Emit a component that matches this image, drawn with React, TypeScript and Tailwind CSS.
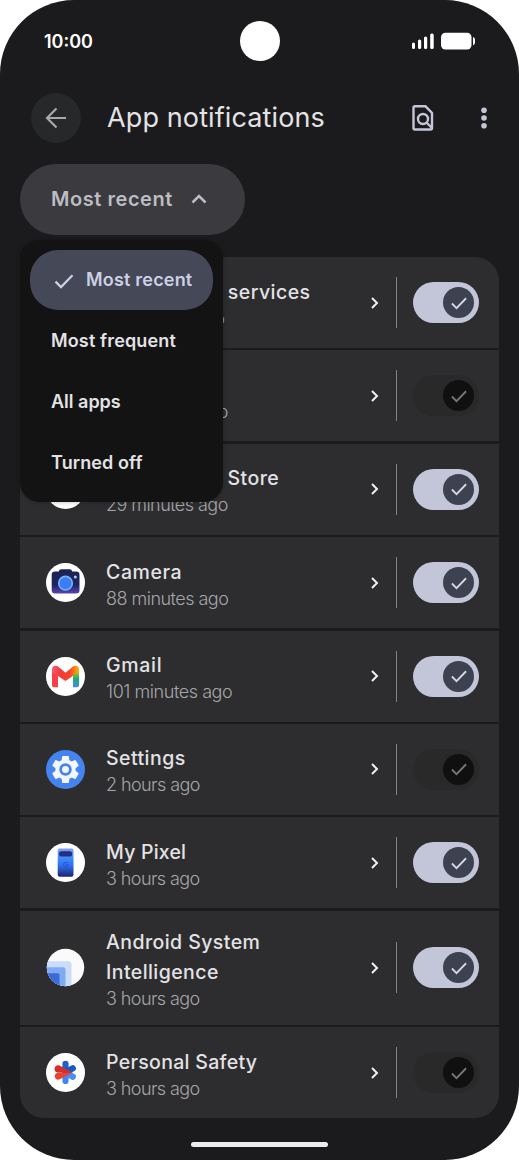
import type { ReactNode } from 'react'
import { Switch } from '@headlessui/react'
import clsx from 'clsx'

type AppRow = {
  title: string
  titleClass: string
  time: string
  timeClass: string
  enabled: boolean
  tall?: boolean
  icon: ReactNode
}

const CheckIcon = ({ className }: { className?: string }) => (
  <svg viewBox="0 0 24 24" fill="none" stroke="currentColor" strokeWidth="2.2" className={className}>
    <path d="M3.500 12.600 9 18.100 20.500 6.300" />
  </svg>
)

const CameraIcon = () => (
  <svg viewBox="0 0 39 39" className="w-[39px] h-[39px]">
    <defs>
      <linearGradient id="cam" x1="0" y1="0" x2="0" y2="1">
        <stop offset="0" stopColor="#1b2352" />
        <stop offset="0.65" stopColor="#1e2560" />
        <stop offset="1" stopColor="#5a45b5" />
      </linearGradient>
    </defs>
    <circle cx="19.5" cy="19.5" r="19.5" fill="#fff" />
    <path
      d="M12.800 8.600q.3-2.300 2.500-2.300h8.400q2.200 0 2.500 2.300h4q3.300 0 3.300 3.300v15.300q0 3.300-3.300 3.300H9q-3.300 0-3.300-3.300V11.900q0-3.300 3.300-3.300z"
      fill="url(#cam)"
    />
    <circle cx="19.500" cy="20.200" r="6.800" fill="#3a7df4" stroke="#76b2fa" strokeWidth="1.600" />
    <circle cx="29.300" cy="14" r="1.500" fill="#a8d1ff" />
  </svg>
)

const GmailIcon = () => (
  <svg viewBox="0 0 39 39" className="w-[39px] h-[39px]">
    <defs>
      <linearGradient id="gmRight" x1="0" y1="0" x2="0" y2="1">
        <stop offset="0" stopColor="#fbbc04" />
        <stop offset="0.35" stopColor="#8bc53f" />
        <stop offset="0.6" stopColor="#1fae6b" />
        <stop offset="1" stopColor="#3c8bf5" />
      </linearGradient>
      <linearGradient id="gmLeft" x1="0" y1="0" x2="0.3" y2="1">
        <stop offset="0" stopColor="#ff7fa8" />
        <stop offset="0.4" stopColor="#f8404a" />
      </linearGradient>
      <linearGradient id="gmMid" x1="0" y1="0" x2="1" y2="0">
        <stop offset="0" stopColor="#fb5b78" />
        <stop offset="0.3" stopColor="#f23b36" />
        <stop offset="0.65" stopColor="#f5432d" />
        <stop offset="1" stopColor="#fbb704" />
      </linearGradient>
    </defs>
    <circle cx="19.5" cy="19.5" r="19.5" fill="#fff" />
    <path d="M6 12.500q0-3 3-3.500l3 4v17.300H8q-2 0-2-2z" fill="url(#gmLeft)" />
    <path d="M33 12.500q0-3-3-3.500l-3 4v17.300H31q2 0 2-2z" fill="url(#gmRight)" />
    <path
      d="M6.200 13.500C5.500 9.300 9.500 7.500 12.300 9.700l7.200 6 7.200-6c2.800-2.200 6.800-.4 6.100 3.800-.2 1.300-.9 2-1.900 2.800L19.500 24 8.100 16.300c-1-.8-1.700-1.500-1.900-2.800z"
      fill="url(#gmMid)"
    />
  </svg>
)

const SettingsIcon = () => (
  <svg viewBox="0 0 39 39" className="w-[39px] h-[39px]">
    <circle cx="19.5" cy="19.5" r="19.5" fill="#4583ee" />
    <g transform="translate(3.300 3.300) scale(1.350)">
      <path
        fill="#f3f6fd"
        d="M19.430 12.980c.040-.320.070-.640.070-.980s-.030-.660-.070-.980l2.110-1.650c.190-.150.240-.420.120-.640l-2-3.460c-.120-.220-.390-.300-.610-.220l-2.490 1c-.520-.400-1.080-.730-1.690-.980l-.380-2.650C14.460 2.180 14.250 2 14 2h-4c-.250 0-.460.180-.490.420l-.380 2.650c-.610.250-1.170.590-1.690.980l-2.490-1c-.230-.090-.490 0-.610.220l-2 3.460c-.130.220-.070.490.120.640l2.110 1.650c-.040.320-.070.650-.070.980s.030.660.070.980l-2.110 1.650c-.190.150-.240.420-.120.640l2 3.460c.120.220.390.300.610.220l2.490-1c.520.400 1.080.730 1.690.980l.380 2.650c.030.240.240.420.490.420h4c.250 0 .460-.180.490-.420l.380-2.650c.610-.250 1.170-.590 1.690-.980l2.490 1c.230.090.490 0 .610-.220l2-3.460c.120-.220.070-.490-.120-.640z"
      />
      <circle cx="12" cy="12" r="3.600" fill="none" stroke="#4583ee" strokeWidth="2" />
    </g>
  </svg>
)

const PixelIcon = () => (
  <svg viewBox="0 0 39 39" className="w-[39px] h-[39px]">
    <defs>
      <linearGradient id="px" x1="0" y1="0" x2="0" y2="1">
        <stop offset="0" stopColor="#8b9cf5" />
        <stop offset="0.2" stopColor="#4a9bfb" />
        <stop offset="0.6" stopColor="#2f6ff0" />
        <stop offset="1" stopColor="#1c2568" />
      </linearGradient>
    </defs>
    <circle cx="19.5" cy="19.5" r="19.5" fill="#fff" />
    <rect x="11.700" y="5.600" width="15.800" height="28.200" rx="2" fill="url(#px)" />
    <rect x="13" y="8.300" width="13.200" height="5.200" rx="2.600" fill="#23307f" />
    <path d="M21.700 20.200a2.300 2.300 0 1 0 .4 1.600h-2.200" fill="none" stroke="#2458d8" strokeWidth="1.100" />
  </svg>
)

const IntelligenceIcon = () => (
  <svg viewBox="0 0 39 39" className="w-[39px] h-[39px]">
    <defs>
      <clipPath id="asiClip">
        <circle cx="19.500" cy="19.500" r="18.700" />
      </clipPath>
    </defs>
    <g clipPath="url(#asiClip)">
      <path d="M0 0h39v39H0z" fill="#fafafb" />
      <rect x="-6" y="13.300" width="31.500" height="32" rx="3.500" fill="#cbdcfa" />
      <rect x="-6" y="19.300" width="25.500" height="26" rx="2.800" fill="#80abf2" />
      <rect x="-6" y="25.200" width="19.500" height="20" rx="1.500" fill="#3a6bd9" />
    </g>
  </svg>
)

const SafetyIcon = () => (
  <svg viewBox="0 0 39 39" className="w-[39px] h-[39px]">
    <circle cx="19.500" cy="19.500" r="19.500" fill="#fff" />
    <g strokeWidth="6.200" strokeLinecap="round">
      <path d="M19.500 10.800v8.700" stroke="#1f5fc9" />
      <path d="M19.500 19.500v8.400" stroke="#4285f4" />
      <path d="m19.500 19.500 7.300 4.200" stroke="#4a8df6" />
      <path d="m19.500 19.500 7.300-4.200" stroke="#1a58c2" />
    </g>
    {/* red petals meeting in a point on the right */}
    <path d="M9.300 18.200 26.500 19.500 13.500 12.500c-3.600-1.600-6.500 2.800-4.200 5.700z" fill="#d2302a" />
    <path d="M26.500 19.500 13.800 26.300c-4 1.700-6.600-3-3.900-5.800L12 19.500z" fill="#ea4335" />
    <path d="M9.300 18.200q1.200 1.500 3.200 1.300h14L14 15z" fill="#d2302a" />
  </svg>
)

const PlainIcon = () => (
  <svg viewBox="0 0 39 39" className="w-[39px] h-[39px]">
    <circle cx="19.500" cy="19.500" r="19.500" fill="#fff" />
  </svg>
)

const APPS: AppRow[] = [
  { title: 'Google Play services', titleClass: 'tracking-[0.45px]', time: '18 minutes ago', timeClass: 'tracking-[-0.52px]', enabled: true, icon: <PlainIcon /> },
  { title: 'Google', titleClass: 'tracking-[0.3px]', time: '29 minutes ago', timeClass: 'tracking-[-0.55px]', enabled: false, icon: <PlainIcon /> },
  { title: 'Google Play Store', titleClass: 'tracking-[0.43px]', time: '29 minutes ago', timeClass: 'tracking-[-0.55px]', enabled: true, icon: <PlainIcon /> },
  { title: 'Camera', titleClass: 'tracking-[0.6px]', time: '88 minutes ago', timeClass: 'tracking-[-0.52px]', enabled: true, icon: <CameraIcon /> },
  { title: 'Gmail', titleClass: 'tracking-[0.7px]', time: '101 minutes ago', timeClass: 'tracking-[-0.44px]', enabled: true, icon: <GmailIcon /> },
  { title: 'Settings', titleClass: 'tracking-[0.45px]', time: '2 hours ago', timeClass: 'tracking-[-0.58px]', enabled: false, icon: <SettingsIcon /> },
  { title: 'My Pixel', titleClass: 'tracking-[0.2px]', time: '3 hours ago', timeClass: 'tracking-[-0.58px]', enabled: true, icon: <PixelIcon /> },
  { title: 'Android System Intelligence', titleClass: 'tracking-[0.43px] w-[200px]', time: '3 hours ago', timeClass: 'tracking-[-0.58px]', enabled: true, tall: true, icon: <IntelligenceIcon /> },
  { title: 'Personal Safety', titleClass: 'tracking-[0.3px]', time: '3 hours ago', timeClass: 'tracking-[-0.58px]', enabled: false, icon: <SafetyIcon /> },
]

function NotificationSwitch({ enabled }: { enabled: boolean }) {
  return (
    <Switch
      defaultChecked
      disabled={!enabled}
      className={clsx(
        'w-[66px] h-[41px] rounded-full flex items-center justify-end pr-[5px] shrink-0',
        enabled ? 'bg-[#c3c6d9]' : 'bg-[#29292a]'
      )}
    >
      <span
        className={clsx(
          'w-[31px] h-[31px] rounded-full flex items-center justify-center',
          enabled ? 'bg-[#3e414f] text-[#d5d8ea]' : 'bg-[#101011] text-[#77777a]'
        )}
      >
        <CheckIcon className="w-[20px] h-[20px]" />
      </span>
    </Switch>
  )
}

function NotificationRow({ app }: { app: AppRow }) {
  return (
    <li className={clsx('bg-[#2d2d2f] flex items-center pl-[26px] pr-[20px]', app.tall ? 'h-[114px]' : 'h-[91px]')}>
      <span className="shrink-0">{app.icon}</span>
      <div className="ml-[21px] flex-1 min-w-0">
        <p className={clsx('text-[19.5px] leading-[30px] font-medium text-[#e3e2e5]', app.titleClass)}>{app.title}</p>
        <p className={clsx('text-[18px] leading-[22px] pt-px -mb-px font-light text-[#a6a6a8]', app.timeClass)}>{app.time}</p>
      </div>
      <svg viewBox="0 0 8 12" className="w-[8px] h-[12px] mr-[17px] shrink-0" fill="none" stroke="#f1f1f3" strokeWidth="2">
        <path d="M1 1l5 5-5 5" />
      </svg>
      <span className="w-[1.500px] h-[51px] bg-[#828284] mr-[16px] shrink-0" />
      <NotificationSwitch enabled={app.enabled} />
    </li>
  )
}

function SortMenu() {
  return (
    <div className="absolute top-[76px] left-0 z-10 w-[203px] h-[262px] rounded-[20px] bg-[#131314] p-[10px] text-[18px] font-semibold text-[#e3e2e5] shadow-[0_0_4px_rgba(0,0,0,0.3)]">
      <div className="h-[60px] rounded-[28px] bg-[#444857] text-[#cdd0e4] flex items-center pl-[22px] pb-[2px]">
        <CheckIcon className="w-[24px] h-[24px] mt-[3px] mr-[10px] shrink-0" />
        <span className="whitespace-nowrap tracking-[0.2px]">Most recent</span>
      </div>
      <div className="h-[61px] flex items-center pl-[21px] tracking-[0.15px]">Most frequent</div>
      <div className="h-[61px] flex items-center pl-[21px] tracking-[0px]">All apps</div>
      <div className="h-[60px] flex items-center pl-[21px] tracking-[0.1px]">Turned off</div>
    </div>
  )
}

export default function App() {
  return (
    <div className="w-[519px] h-[1160px] bg-white overflow-hidden font-['Inter',sans-serif]">
      <div className="w-full h-full bg-[#1b1b1d] rounded-[74px] overflow-hidden flex flex-col">
        {/* Status bar */}
        <div className="h-[82px] grid grid-cols-[1fr_40px_1fr] items-center pl-[44px] pr-[44px] shrink-0">
          <span className="text-[18px] font-semibold text-white">10:00</span>
          <span className="w-[40px] h-[40px] rounded-full bg-white" />
          <svg viewBox="0 0 64 18" className="w-[64px] h-[18px] justify-self-end" fill="#fff">
            <rect x="1" y="10.500" width="3" height="6.500" rx="1.500" />
            <rect x="7" y="7.500" width="3.200" height="9.500" rx="1.500" />
            <rect x="13" y="4.500" width="3.200" height="12.500" rx="1.500" />
            <rect x="19.200" y="1.500" width="3.500" height="15.500" rx="1.500" />
            <rect x="30" y="0.700" width="30.500" height="16.800" rx="4.500" />
            <path d="M62 5q2 .6 2 2.500v3.300Q64 12.700 62 13.300z" />
          </svg>
        </div>

        {/* Toolbar */}
        <header className="h-[72px] flex items-center pl-[31px] pr-[32px] shrink-0">
          <button className="w-[50px] h-[50px] rounded-full bg-[#272829] flex items-center justify-center" aria-label="Back">
            <svg viewBox="0 0 22 22" className="w-[22px] h-[22px]" fill="none" stroke="#a9a9ac" strokeWidth="2.200">
              <path d="M21 11H2.500M11.500 1.500 2 11l9.500 9.500" />
            </svg>
          </button>
          <h1 className="flex-1 ml-[26px] text-[27px] leading-[36px] font-normal text-[#e3e2e5] tracking-[0.12px] whitespace-nowrap">App notifications</h1>
          <svg viewBox="0 0 22 26" className="w-[22px] h-[26px] mr-[47px]" fill="none" stroke="#c4c6d8" strokeWidth="2.400">
            <path d="M3 1.300h10.500L20 8v15q0 1.500-1.500 1.500H3q-1.500 0-1.500-1.500V2.800Q1.500 1.300 3 1.300z" />
            <circle cx="11" cy="14" r="5" />
            <path d="m14.500 17.500 5 5" />
          </svg>
          <svg viewBox="0 0 6 22" className="w-[6px] h-[22px]" fill="#c4c6d8">
            <circle cx="3" cy="3.200" r="2.800" />
            <circle cx="3" cy="11" r="2.800" />
            <circle cx="3" cy="18.800" r="2.800" />
          </svg>
        </header>

        <main className="px-5 pt-[10px] flex flex-col">
          {/* Sort dropdown */}
          <div className="relative">
            <button className="w-[225px] h-[71px] rounded-full bg-[#3a3a3f] flex items-center pl-[31px] pb-[2px] text-[20px] font-semibold text-[#bcbcc2]">
              <span className="w-[122px] text-left whitespace-nowrap tracking-[0.55px]">Most recent</span>
              <svg viewBox="0 0 16 10" className="w-[16px] h-[10px] ml-[18px]" fill="none" stroke="currentColor" strokeWidth="2.500">
                <path d="M1.500 8.500 8 2l6.500 6.500" />
              </svg>
            </button>
            <SortMenu />
          </div>

          <ul className="mt-[22px] flex flex-col gap-[2.400px] rounded-[24px] overflow-hidden">
            {APPS.map((app, i) => (
              <NotificationRow key={i} app={app} />
            ))}
          </ul>
        </main>

        {/* Gesture bar */}
        <div className="mt-[24px] w-[137px] h-[5px] rounded-full bg-[#ececec] self-center shrink-0" />
      </div>
    </div>
  )
}
